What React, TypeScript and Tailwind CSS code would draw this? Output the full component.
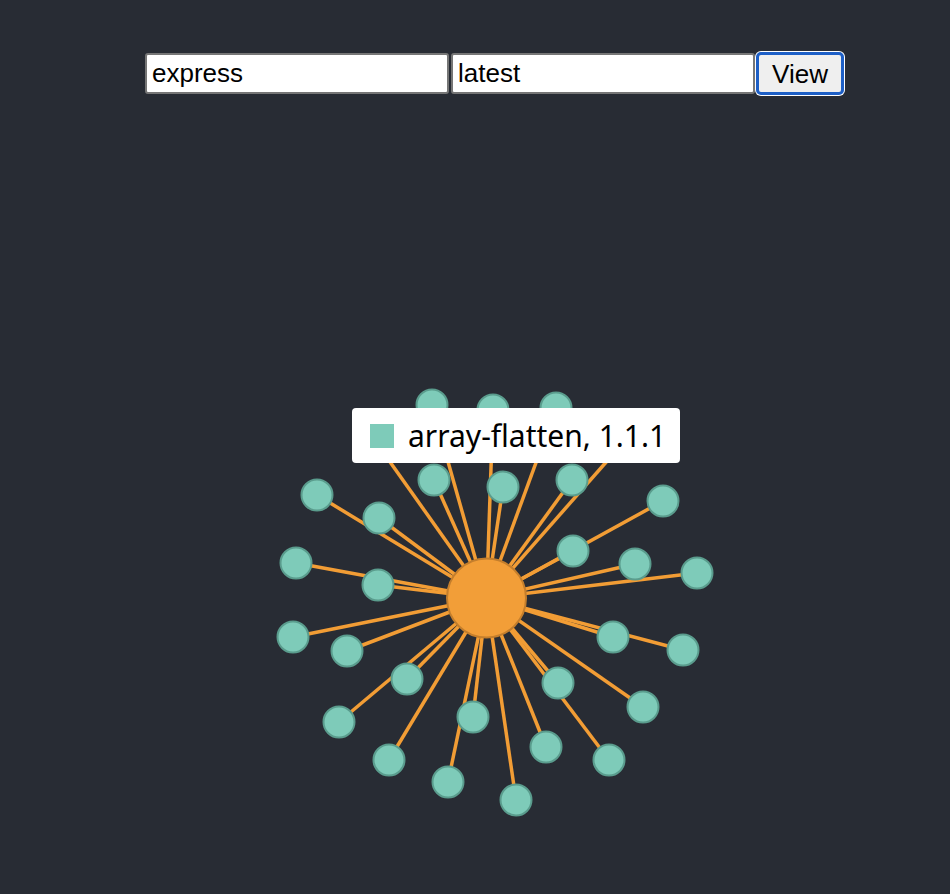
import { useState } from "react";

type Pt = { x: number; y: number };

const center: Pt = { x: 486.5, y: 598 };

// leaf positions of the dependency graph (force layout snapshot)
const leaves: Pt[] = [
  { x: 432, y: 405 },
  { x: 493, y: 410 },
  { x: 556, y: 408 },
  { x: 378, y: 445 },
  { x: 630, y: 435 },
  { x: 434, y: 480 },
  { x: 503, y: 487 },
  { x: 572, y: 480 },
  { x: 317, y: 495 },
  { x: 379, y: 518 },
  { x: 663, y: 501 },
  { x: 573, y: 551 },
  { x: 296, y: 563 },
  { x: 378, y: 585 },
  { x: 635, y: 564 },
  { x: 697, y: 573 },
  { x: 293, y: 637 },
  { x: 347, y: 651 },
  { x: 407, y: 679 },
  { x: 339, y: 722 },
  { x: 389, y: 760 },
  { x: 448, y: 782 },
  { x: 473, y: 717 },
  { x: 516, y: 800 },
  { x: 546, y: 747 },
  { x: 558, y: 683 },
  { x: 609, y: 760 },
  { x: 643, y: 707 },
  { x: 613, y: 637 },
  { x: 683, y: 650 },
];

function Graph() {
  return (
    <svg
      className="absolute left-0 top-0"
      width={950}
      height={894}
      viewBox="0 0 950 894"
    >
      <g stroke="#f29d35" strokeWidth={3.5}>
        {leaves.map((p, i) => (
          <line key={i} x1={center.x} y1={center.y} x2={p.x} y2={p.y} />
        ))}
      </g>
      {leaves.map((p, i) => (
        <circle
          key={i}
          cx={p.x}
          cy={p.y}
          r={15.5}
          fill="#7ecbb9"
          stroke="#5a9c8d"
          strokeWidth={2}
        />
      ))}
      <circle
        cx={center.x}
        cy={center.y}
        r={39.5}
        fill="#f29e38"
        stroke="#c47e2c"
        strokeWidth={2}
      />
    </svg>
  );
}

export default function App() {
  const [name, setName] = useState("express");
  const [version, setVersion] = useState("latest");

  return (
    <div className="relative min-h-screen w-full overflow-hidden bg-[#282c34] font-['Liberation_Sans',Arial,sans-serif]">
      <Graph />

      <form
        className="relative flex items-center pl-[145px] pt-[52px]"
        onSubmit={(e) => e.preventDefault()}
      >
        <input
          value={name}
          onChange={(e) => setName(e.target.value)}
          className="h-[41px] w-[304px] rounded-[3px] border-2 border-[#767676] bg-white px-[5px] text-[26px] text-black outline-none"
        />
        <input
          value={version}
          onChange={(e) => setVersion(e.target.value)}
          className="ml-[2px] h-[41px] w-[304px] rounded-[3px] border-2 border-[#767676] bg-white px-[5px] text-[26px] text-black outline-none"
        />
        <button
          type="submit"
          className="ml-[1px] h-[43px] w-[88px] rounded-[5px] border-[3px] border-[#1d5fc6] bg-[#efefef] text-[26px] leading-none text-black ring-1 ring-white"
        >
          View
        </button>
      </form>

      <div className="absolute left-[352px] top-[408px] flex h-[55px] w-[328px] items-center rounded-[4px] bg-white pl-[18px]">
        <span className="h-[24px] w-[24px] bg-[#7ecbb9]" />
        <span className="ml-[14px] whitespace-nowrap font-['Noto_Sans',sans-serif] text-[30px] leading-none text-black">
          array-flatten, 1.1.1
        </span>
      </div>
    </div>
  );
}
